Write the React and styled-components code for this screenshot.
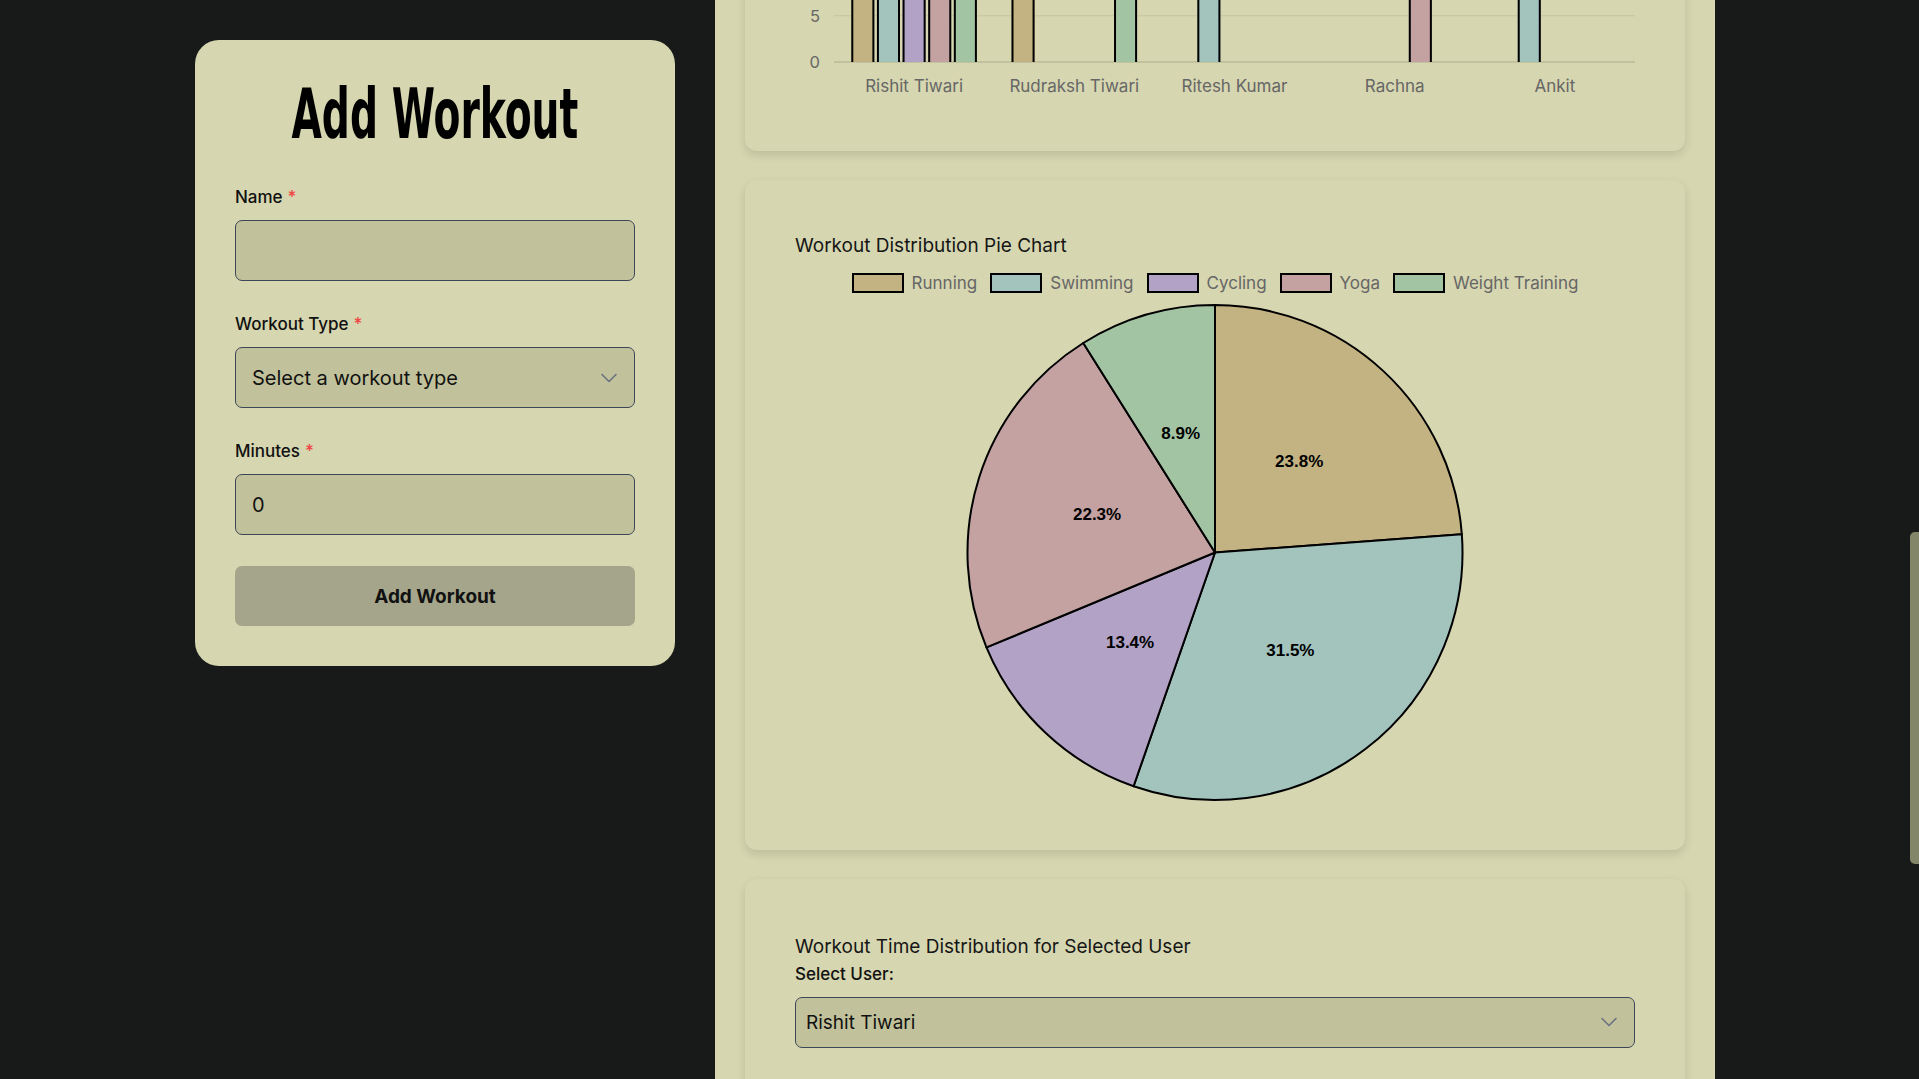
import React, { useLayoutEffect, useRef, useState } from "react";
import styled, { createGlobalStyle } from "styled-components";
import { ChevronDown } from "lucide-react";

const TYPES = [
  { name: "Running", color: "#c4b382" },
  { name: "Swimming", color: "#a2c4bd" },
  { name: "Cycling", color: "#b1a2c6" },
  { name: "Yoga", color: "#c4a2a2" },
  { name: "Weight Training", color: "#a3c4a3" },
];

const USERS = [
  { name: "Rishit Tiwari", minutes: [50, 45, 54, 45, 16] },
  { name: "Rudraksh Tiwari", minutes: [46, 0, 0, 0, 20] },
  { name: "Ritesh Kumar", minutes: [0, 42, 0, 0, 0] },
  { name: "Rachna", minutes: [0, 0, 0, 45, 0] },
  { name: "Ankit", minutes: [0, 40, 0, 0, 0] },
];

const TOTALS = TYPES.map((_, i) => USERS.reduce((s, u) => s + u.minutes[i], 0));

const GlobalStyle = createGlobalStyle`
  html, body { margin: 0; padding: 0; height: 100%; overflow: hidden; background: #181a19; }
  body { font-family: Inter, "Noto Sans", "Liberation Sans", sans-serif; color: #111; }
  #root { height: 100%; }
  *, *::before, *::after { box-sizing: border-box; }
`;

const Page = styled.div`
  display: flex;
  height: 100vh;
  background: #181a19;
`;

const Scroller = styled.div`
  flex: 1;
  min-width: 0;
  height: 100%;
  overflow-y: auto;
  scrollbar-width: none;
  &::-webkit-scrollbar { display: none; }
`;

const Track = styled.div`
  width: 9px;
  flex-shrink: 0;
  height: 100%;
  display: flex;
  flex-direction: column;
  background: #181a19;
`;

const Thumb = styled.div`
  width: 9px;
  background: #84866a;
  border-radius: 5px 0 0 5px;
`;

const Layout = styled.div`
  display: grid;
  grid-template-columns: 480px 1000px;
  column-gap: 40px;
  width: 1520px;
  margin: 0 auto;
`;

const LeftColumn = styled.aside`
  padding-top: 40px;
`;

const FormCard = styled.form`
  position: sticky;
  top: 40px;
  background: #d6d6b0;
  border-radius: 24px;
  padding: 40px;
`;

const Title = styled.h1`
  display: flex;
  justify-content: center;
  margin: 0 0 37px;
  height: 68px;
  line-height: 68px;
  font-family: "Liberation Sans Narrow", "DejaVu Sans Condensed", "Liberation Sans", sans-serif;
  font-size: 69px;
  font-weight: 700;
  color: #000;
  white-space: nowrap;
`;

const TitleText = styled.span`
  display: block;
  flex-shrink: 0;
  transform-origin: center;
`;

const Field = styled.div`
  margin-bottom: 31px;
`;

const Label = styled.label`
  display: block;
  font-size: 17px;
  line-height: 24px;
  font-weight: 500;
  color: #111;
  margin-bottom: 11px;
`;

const Req = styled.span`
  color: #ef4444;
  margin-left: 5px;
`;

const TextInput = styled.input`
  display: block;
  width: 100%;
  height: 61px;
  background: #c1c29b;
  border: 1px solid #3d4657;
  border-radius: 7px;
  padding: 0 16px;
  font-family: Inter, "Noto Sans", sans-serif;
  font-size: 20px;
  color: #111;
  outline: none;
`;

const SelectWrap = styled.div`
  position: relative;
`;

const Select = styled.select`
  display: block;
  width: 100%;
  height: ${(p) => p.$h}px;
  appearance: none;
  -webkit-appearance: none;
  background: #c1c29b;
  border: 1px solid #3d4657;
  border-radius: 7px;
  padding: 0 40px 0 ${(p) => p.$pad}px;
  font-family: Inter, "Noto Sans", sans-serif;
  font-size: ${(p) => p.$fs}px;
  color: #111;
  outline: none;
`;

const Chevron = styled(ChevronDown)`
  position: absolute;
  right: 12px;
  top: 50%;
  transform: translateY(-50%);
  color: #6b7280;
  pointer-events: none;
`;

const SubmitButton = styled.button`
  display: block;
  width: 100%;
  height: 60px;
  border: none;
  border-radius: 7px;
  background: #a5a58b;
  font-family: Inter, "Noto Sans", sans-serif;
  font-size: 19px;
  font-weight: 700;
  color: #111;
`;

const RightColumn = styled.main`
  background: #d6d6b0;
  padding: 47px 30px 41px;
  display: flex;
  flex-direction: column;
  gap: 29px;
`;

const Card = styled.section`
  background: #d6d6b0;
  border-radius: 12px;
  box-shadow: 0 4px 10px rgba(0, 0, 0, 0.12);
  padding: 50px 50px ${(p) => p.$pb || 50}px;
`;

const CardTitle = styled.h3`
  margin: 0;
  padding-top: ${(p) => p.$pt || 4}px;
  font-size: 19px;
  line-height: 23px;
  font-weight: 400;
  color: #161616;
`;

const BigTitle = styled.h2`
  margin: 0 0 24px;
  font-size: 32px;
  font-weight: 700;
  color: #161616;
`;

const StatGrid = styled.div`
  display: grid;
  grid-template-columns: repeat(3, 1fr);
  gap: 20px;
`;

const Stat = styled.div`
  background: #c1c29b;
  border-radius: 10px;
  padding: 20px 24px;
  display: flex;
  flex-direction: column;
  gap: 8px;
`;

const StatLabel = styled.span`
  font-size: 15px;
  color: #555;
`;

const StatValue = styled.span`
  font-size: 32px;
  font-weight: 700;
  color: #161616;
`;

const Table = styled.table`
  width: 100%;
  margin-top: 20px;
  border-collapse: collapse;
  font-size: 17px;
`;

const Th = styled.th`
  text-align: left;
  height: 48px;
  padding: 0 12px;
  font-weight: 600;
  border-bottom: 2px solid #a5a58b;
`;

const Td = styled.td`
  height: 52px;
  padding: 0 12px;
  border-bottom: 1px solid #c1c29b;
  color: #222;
`;

const Legend = styled.div`
  display: flex;
  justify-content: center;
  align-items: center;
  flex-wrap: wrap;
  gap: 13px;
  margin-top: ${(p) => p.$mt || 16}px;
`;

const LegendItem = styled.div`
  display: flex;
  align-items: center;
  gap: 8px;
  font-size: 17px;
  line-height: 20px;
  color: #666;
`;

const Swatch = styled.span`
  width: 52px;
  height: 20px;
  border: 2px solid #000;
  background: ${(p) => p.$color};
`;

const ChartSvg = styled.svg`
  display: block;
  margin-top: ${(p) => p.$mt || 10}px;
  font-family: Inter, "Noto Sans", sans-serif;
  overflow: visible;
`;

const SelectLabel = styled.label`
  display: block;
  margin-top: 4px;
  margin-bottom: 11px;
  font-size: 17px;
  line-height: 24px;
  font-weight: 500;
  color: #111;
`;

function ChartLegend({ mt }) {
  return (
    <Legend $mt={mt}>
      {TYPES.map((t) => (
        <LegendItem key={t.name}>
          <Swatch $color={t.color} />
          {t.name}
        </LegendItem>
      ))}
    </Legend>
  );
}

function PieChart({ values, width, height, r, mt }) {
  const total = values.reduce((a, b) => a + b, 0);
  const cx = width / 2;
  const cy = height / 2;
  let angle = -Math.PI / 2;
  const slices = values.map((v, i) => {
    const sweep = (v / total) * Math.PI * 2;
    const a0 = angle;
    const a1 = angle + sweep;
    angle = a1;
    const x0 = cx + r * Math.cos(a0);
    const y0 = cy + r * Math.sin(a0);
    const x1 = cx + r * Math.cos(a1);
    const y1 = cy + r * Math.sin(a1);
    const large = sweep > Math.PI ? 1 : 0;
    const mid = (a0 + a1) / 2;
    return {
      d: `M ${cx} ${cy} L ${x0} ${y0} A ${r} ${r} 0 ${large} 1 ${x1} ${y1} Z`,
      color: TYPES[i].color,
      lx: cx + r * 0.5 * Math.cos(mid),
      ly: cy + r * 0.5 * Math.sin(mid),
      pct: ((v / total) * 100).toFixed(1) + "%",
      show: v > 0,
    };
  });
  return (
    <ChartSvg $mt={mt} width={width} height={height} viewBox={`0 0 ${width} ${height}`}>
      {slices.map((s, i) =>
        s.show ? (
          <path key={i} d={s.d} fill={s.color} stroke="#000" strokeWidth="2" strokeLinejoin="round" />
        ) : null
      )}
      {slices.map((s, i) =>
        s.show ? (
          <text
            key={"t" + i}
            x={s.lx}
            y={s.ly}
            textAnchor="middle"
            dominantBaseline="central"
            fontFamily='"Liberation Sans", Arial, sans-serif'
            fontWeight="700"
            fontSize="17"
            fill="#000"
          >
            {s.pct}
          </text>
        ) : null
      )}
    </ChartSvg>
  );
}

function BarChart() {
  const W = 840;
  const plotL = 39;
  const plotR = 840;
  const plotT = 20;
  const unit = 9.25;
  const max = 60;
  const plotB = plotT + max * unit;
  const H = plotB + 38;
  const catW = (plotR - plotL) / USERS.length;
  const slot = (catW * 0.8) / TYPES.length;
  const barW = slot * 0.9;
  const ticks = [];
  for (let v = 0; v <= max; v += 5) ticks.push(v);
  return (
    <ChartSvg width={W} height={H} viewBox={`0 0 ${W} ${H}`}>
      {ticks.map((v) => {
        const y = plotB - v * unit;
        return (
          <g key={v}>
            <line
              x1={plotL}
              x2={plotR}
              y1={y}
              y2={y}
              stroke={v === 0 ? "rgba(0,0,0,0.2)" : "rgba(0,0,0,0.08)"}
              strokeWidth="1.2"
            />
            <text x={25} y={y + 6} textAnchor="end" fontSize="16.5" fill="#666">
              {v}
            </text>
          </g>
        );
      })}
      {USERS.map((u, ui) =>
        u.minutes.map((m, ti) => {
          if (!m) return null;
          const x = plotL + ui * catW + catW * 0.1 + ti * slot + slot * 0.05;
          const top = plotB - m * unit;
          return (
            <g key={ui + "-" + ti}>
              <rect x={x} y={top} width={barW} height={plotB - top} fill={TYPES[ti].color} />
              <path
                d={`M ${x + 1} ${plotB} L ${x + 1} ${top + 1} L ${x + barW - 1} ${top + 1} L ${x + barW - 1} ${plotB}`}
                fill="none"
                stroke="#000"
                strokeWidth="2"
              />
            </g>
          );
        })
      )}
      {USERS.map((u, ui) => (
        <text
          key={u.name}
          x={plotL + ui * catW + catW / 2}
          y={plotB + 30}
          textAnchor="middle"
          fontSize="17"
          fill="#666"
        >
          {u.name}
        </text>
      ))}
    </ChartSvg>
  );
}

function FitTitle({ children, target }) {
  const ref = useRef(null);
  const [scale, setScale] = useState(1);
  useLayoutEffect(() => {
    const measure = () => {
      if (!ref.current) return;
      const w = ref.current.offsetWidth;
      if (w) setScale(target / w);
    };
    measure();
    if (document.fonts && document.fonts.ready) document.fonts.ready.then(measure);
  }, [target]);
  return (
    <TitleText ref={ref} style={{ transform: `scaleX(${scale})` }}>
      {children}
    </TitleText>
  );
}

export default function App() {
  const scrollerRef = useRef(null);
  const pieRef = useRef(null);
  const [thumb, setThumb] = useState({ top: 533, height: 329 });
  const [user, setUser] = useState("Rishit Tiwari");

  useLayoutEffect(() => {
    const measure = () => {
      const s = scrollerRef.current;
      const p = pieRef.current;
      if (!s || !p) return;
      const delta = p.getBoundingClientRect().top - s.getBoundingClientRect().top - 180;
      s.scrollTop = s.scrollTop + delta;
      const ch = s.clientHeight;
      const sh = s.scrollHeight;
      const h = Math.max(20, (ch * ch) / sh);
      const top = sh > ch ? (s.scrollTop / (sh - ch)) * (ch - h) : 0;
      setThumb({ top, height: h });
    };
    measure();
    if (document.fonts && document.fonts.ready) document.fonts.ready.then(measure);
  }, []);

  const selected = USERS.find((u) => u.name === user) || USERS[0];
  const workoutRows = [];
  USERS.forEach((u) =>
    u.minutes.forEach((m, i) => {
      if (m) workoutRows.push({ user: u.name, type: TYPES[i].name, minutes: m });
    })
  );

  return (
    <Page>
      <GlobalStyle />
      <Scroller ref={scrollerRef}>
        <Layout>
          <LeftColumn>
            <FormCard onSubmit={(e) => e.preventDefault()}>
              <Title>
                <FitTitle target={287}>Add Workout</FitTitle>
              </Title>
              <Field>
                <Label htmlFor="name">
                  Name<Req>*</Req>
                </Label>
                <TextInput id="name" type="text" defaultValue="" />
              </Field>
              <Field>
                <Label htmlFor="type">
                  Workout Type<Req>*</Req>
                </Label>
                <SelectWrap>
                  <Select id="type" $h={61} $fs={20} $pad={16} defaultValue="">
                    <option value="">Select a workout type</option>
                    {TYPES.map((t) => (
                      <option key={t.name}>{t.name}</option>
                    ))}
                  </Select>
                  <Chevron size={28} strokeWidth={1.4} />
                </SelectWrap>
              </Field>
              <Field>
                <Label htmlFor="minutes">
                  Minutes<Req>*</Req>
                </Label>
                <TextInput id="minutes" type="number" defaultValue="0" />
              </Field>
              <SubmitButton type="submit">Add Workout</SubmitButton>
            </FormCard>
          </LeftColumn>

          <RightColumn>
            <Card>
              <BigTitle>Fitness Dashboard</BigTitle>
              <StatGrid>
                <Stat>
                  <StatLabel>Users</StatLabel>
                  <StatValue>{USERS.length}</StatValue>
                </Stat>
                <Stat>
                  <StatLabel>Workouts</StatLabel>
                  <StatValue>{workoutRows.length}</StatValue>
                </Stat>
                <Stat>
                  <StatLabel>Total Minutes</StatLabel>
                  <StatValue>{TOTALS.reduce((a, b) => a + b, 0)}</StatValue>
                </Stat>
              </StatGrid>
            </Card>

            <Card>
              <CardTitle>Workout Log</CardTitle>
              <Table>
                <thead>
                  <tr>
                    <Th>Name</Th>
                    <Th>Workout Type</Th>
                    <Th>Minutes</Th>
                  </tr>
                </thead>
                <tbody>
                  {workoutRows.map((r, i) => (
                    <tr key={i}>
                      <Td>{r.user}</Td>
                      <Td>{r.type}</Td>
                      <Td>{r.minutes}</Td>
                    </tr>
                  ))}
                </tbody>
              </Table>
            </Card>

            <Card $pb={51}>
              <CardTitle>Workout Minutes by User</CardTitle>
              <ChartLegend />
              <BarChart />
            </Card>

            <Card ref={pieRef} $pb={48}>
              <CardTitle>Workout Distribution Pie Chart</CardTitle>
              <ChartLegend />
              <PieChart values={TOTALS} width={840} height={499} r={247.5} mt={10} />
            </Card>

            <Card>
              <CardTitle $pt={6}>Workout Time Distribution for Selected User</CardTitle>
              <SelectLabel htmlFor="user">Select User:</SelectLabel>
              <SelectWrap>
                <Select
                  id="user"
                  $h={51}
                  $fs={19}
                  $pad={10}
                  value={user}
                  onChange={(e) => setUser(e.target.value)}
                >
                  {USERS.map((u) => (
                    <option key={u.name}>{u.name}</option>
                  ))}
                </Select>
                <Chevron size={28} strokeWidth={1.4} />
              </SelectWrap>
              <ChartLegend mt={44} />
              <PieChart values={selected.minutes} width={840} height={560} r={270} mt={12} />
            </Card>
          </RightColumn>
        </Layout>
      </Scroller>
      <Track>
        <Thumb style={{ marginTop: thumb.top, height: thumb.height }} />
      </Track>
    </Page>
  );
}
